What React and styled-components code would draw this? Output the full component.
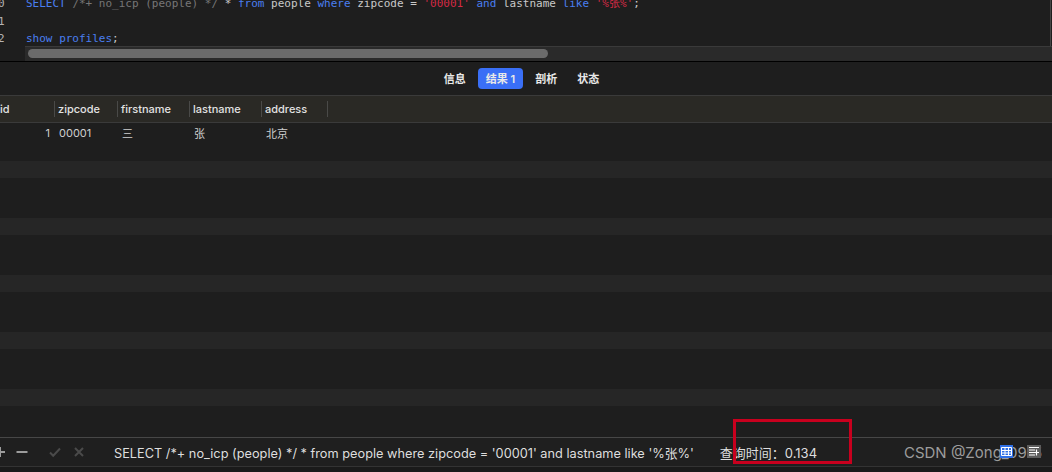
import styled, { createGlobalStyle } from "styled-components";

const GlobalStyle = createGlobalStyle`
  * { box-sizing: border-box; }
  html, body { margin: 0; padding: 0; background: #1e1e1e; }
  body {
    font-family: Inter, "Noto Sans CJK SC", sans-serif;
    overflow: hidden;
  }
`;

const Frame = styled.div`
  position: relative;
  width: 1052px;
  height: 472px;
  display: flex;
  flex-direction: column;
  overflow: hidden;
  background: #1e1e1e;
`;

/* ---------- editor ---------- */

const Editor = styled.div`
  display: flex;
  height: 61px;
  flex-shrink: 0;
`;

const Gutter = styled.div`
  width: 25px;
  flex-shrink: 0;
  overflow: hidden;
  font-family: "DejaVu Sans Mono", monospace;
  font-size: 11px;
  line-height: 17.5px;
  color: #b4b4b4;
`;

const GutterNums = styled.div`
  margin-top: -5px;
  margin-left: -2px;
`;

const CodeColumn = styled.div`
  flex: 1;
  display: flex;
  flex-direction: column;
`;

const CodeLines = styled.div`
  height: 46px;
  margin-right: 1px;
  border-right: 1px solid #454545;
  overflow: hidden;
  padding-left: 1px;
  font-family: "DejaVu Sans Mono", "Noto Sans CJK SC", monospace;
  font-size: 11px;
  line-height: 17.5px;
  color: #c9c9c9;
  white-space: pre;
`;

const LinesInner = styled.div`
  margin-top: -5px;
`;

const Line = styled.div`
  height: 17.5px;
`;

const tokenColors = {
  kw: "#4a7ff0",
  com: "#767676",
  str: "#d42a45",
  plain: "#c9c9c9",
};

const Tok = styled.span`
  color: ${(p) => tokenColors[p.$kind || "plain"]};
`;

const ScrollTrack = styled.div`
  height: 15px;
  background: #2a2a2a;
  border-top: 1px solid #3a3a3a;
  padding: 2px 3px 3px;
`;

const ScrollThumb = styled.div`
  width: 520px;
  height: 9px;
  border-radius: 5px;
  background: #6b6b6b;
`;

const Divider = styled.div`
  height: 1px;
  flex-shrink: 0;
  background: #000;
`;

/* ---------- tabs ---------- */

const TabBar = styled.div`
  height: 34px;
  flex-shrink: 0;
  display: flex;
  align-items: center;
  justify-content: center;
  gap: 4px;
  padding: 0 9px 1px 0;
  border-bottom: 1px solid #3a3a3a;
`;

const Tab = styled.div`
  height: 21px;
  padding: 0 8px;
  display: flex;
  align-items: center;
  border-radius: 4px;
  font-size: 11px;
  font-weight: 600;
  color: #e8e8e8;
  background: ${(p) => (p.$active ? "#3a6ff6" : "transparent")};
`;

/* ---------- grid ---------- */

const columns = [
  { key: "id", label: "id", width: 55, align: "right" },
  { key: "zipcode", label: "zipcode", width: 63 },
  { key: "firstname", label: "firstname", width: 72 },
  { key: "lastname", label: "lastname", width: 72 },
  { key: "address", label: "address", width: 66 },
];

const HeaderRow = styled.div`
  height: 27px;
  flex-shrink: 0;
  display: flex;
  align-items: center;
  background: #2a2925;
  border-bottom: 1px solid #3a3a3a;
`;

const HeaderCell = styled.div`
  width: ${(p) => p.$w}px;
  flex-shrink: 0;
  padding-left: ${(p) => (p.$first ? 0 : 3)}px;
  font-size: 11px;
  font-weight: 500;
  color: #e2e2e2;
  line-height: 16px;
  border-right: 1px solid #4a4a48;
`;

const GridBody = styled.div`
  flex: 1;
  min-height: 0;
  overflow: hidden;
`;

const Row = styled.div`
  height: 19px;
  display: flex;
  align-items: center;
  background: ${(p) => (p.$light ? "#262626" : "#1e1e1e")};
  box-shadow: ${(p) => (p.$light ? "inset 0 -2px 0 #1e1e1e" : "none")};
`;

const Cell = styled.div`
  width: ${(p) => p.$w}px;
  flex-shrink: 0;
  font-size: 11px;
  color: #cfcfcf;
  text-align: ${(p) => p.$align || "left"};
  padding: ${(p) => (p.$align === "right" ? "0 5px 0 0" : "0 0 0 4px")};
`;

/* ---------- bottom bar ---------- */

const BottomBar = styled.div`
  height: 30px;
  flex-shrink: 0;
  display: flex;
  align-items: center;
  border-top: 1px solid #474747;
  border-bottom: 1px solid #333;
  background: #1f1f1f;
`;

const Footer = styled.div`
  height: 5px;
  flex-shrink: 0;
  background: #1a1a1a;
`;

const IconBtn = styled.span`
  display: flex;
  width: 12px;
  height: 12px;
  margin-left: ${(p) => p.$ml}px;
  color: ${(p) => (p.$dim ? "#4a4a4a" : "#9c9c9c")};
`;

const QueryText = styled.span`
  margin-left: 29px;
  font-size: 12.75px;
  color: #dedede;
  white-space: nowrap;
`;

const TimeText = styled.span`
  margin-left: 26px;
  font-size: 13px;
  color: #dedede;
  white-space: nowrap;
`;

const Watermark = styled.span`
  position: relative;
  margin-left: auto;
  margin-right: 10px;
  font-size: 15px;
  color: #9c9c9c;
  white-space: nowrap;
`;

const BadgeIcon = styled.span`
  position: absolute;
  top: 2px;
  left: ${(p) => p.$left}px;
  display: flex;
`;

const Annotation = styled.div`
  position: absolute;
  left: 733px;
  top: 419px;
  width: 119px;
  height: 45px;
  border: 3px solid #c8001e;
  pointer-events: none;
`;

const Stroke = ({ d }) => (
  <svg width="12" height="12" viewBox="0 0 12 12" fill="none" stroke="currentColor" strokeWidth="2">
    <path d={d} />
  </svg>
);

const rows = Array.from({ length: 17 }, (_, i) => i);

export default function App() {
  return (
    <>
      <GlobalStyle />
      <Frame>
        <Editor>
          <Gutter>
            <GutterNums>
              <div>0</div>
              <div>1</div>
              <div>2</div>
            </GutterNums>
          </Gutter>
          <CodeColumn>
            <CodeLines>
              <LinesInner>
                <Line>
                  <Tok $kind="kw">SELECT</Tok> <Tok $kind="com">/*+ no_icp (people) */</Tok> *{" "}
                  <Tok $kind="kw">from</Tok> people <Tok $kind="kw">where</Tok> zipcode ={" "}
                  <Tok $kind="str">'00001'</Tok> <Tok $kind="kw">and</Tok> lastname{" "}
                  <Tok $kind="kw">like</Tok> <Tok $kind="str">'%张%'</Tok>;
                </Line>
                <Line />
                <Line>
                  <Tok $kind="kw">show</Tok> <Tok $kind="kw">profiles</Tok>;
                </Line>
              </LinesInner>
            </CodeLines>
            <ScrollTrack>
              <ScrollThumb />
            </ScrollTrack>
          </CodeColumn>
        </Editor>
        <Divider />

        <TabBar>
          <Tab>信息</Tab>
          <Tab $active>结果 1</Tab>
          <Tab>剖析</Tab>
          <Tab>状态</Tab>
        </TabBar>

        <HeaderRow>
          {columns.map((c, i) => (
            <HeaderCell key={c.key} $w={c.width} $first={i === 0}>
              {c.label}
            </HeaderCell>
          ))}
        </HeaderRow>

        <GridBody>
          {rows.map((i) => (
            <Row key={i} $light={i % 3 === 2}>
              {i === 0 && (
                <>
                  <Cell $w={55} $align="right">1</Cell>
                  <Cell $w={63}>00001</Cell>
                  <Cell $w={72}>三</Cell>
                  <Cell $w={72}>张</Cell>
                  <Cell $w={66}>北京</Cell>
                </>
              )}
            </Row>
          ))}
        </GridBody>

        <BottomBar>
          <IconBtn $ml={-6}>
            <Stroke d="M1 6h10M6 1v10" />
          </IconBtn>
          <IconBtn $ml={10}>
            <Stroke d="M0.5 6h11" />
          </IconBtn>
          <IconBtn $ml={21} $dim>
            <Stroke d="M1 6.5l3.2 3.2L11 2.5" />
          </IconBtn>
          <IconBtn $ml={12} $dim>
            <Stroke d="M2 2l8 8M10 2l-8 8" />
          </IconBtn>
          <QueryText>
            SELECT /*+ no_icp (people) */ * from people where zipcode = '00001' and lastname like '%张%'
          </QueryText>
          <TimeText>查询时间：0.134</TimeText>
          <Watermark>
            CSDN @Zong_0915
            <BadgeIcon $left={96}>
              <svg width="13" height="13" viewBox="0 0 13 13">
                <rect width="13" height="13" fill="#2f6fe6" />
                <path d="M1.5 2.5h10v8h-10zM1.5 5.5h10M1.5 8h10M5 2.5v8M8.5 2.5v8" fill="none" stroke="#fff" strokeWidth="1" />
              </svg>
            </BadgeIcon>
            <BadgeIcon $left={123}>
              <svg width="14" height="13" viewBox="0 0 14 13">
                <rect width="14" height="13" fill="#5c5c5c" />
                <path d="M2 2.5h10M2 5h6M2 7.5h10M2 10h6M9.5 4.5v6" fill="none" stroke="#fff" strokeWidth="1.2" />
              </svg>
            </BadgeIcon>
          </Watermark>
        </BottomBar>
        <Footer />
        <Annotation />
      </Frame>
    </>
  );
}
